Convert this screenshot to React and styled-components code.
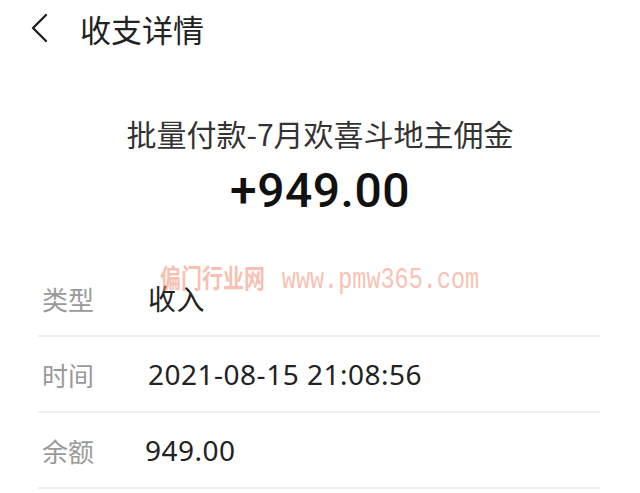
import styled, { createGlobalStyle } from 'styled-components'

//* Global
const GlobalStyle = createGlobalStyle`
  body {
    margin: 0;
    background: #fff;
    font-family: "Noto Sans CJK SC", "Noto Sans", sans-serif;
  }
`

const rows = [
  { label: '类型', value: '收入' },
  { label: '时间', value: '2021-08-15 21:08:56' },
  { label: '余额', value: '949.00', shift: -3 },
]

const App = () => {
  return (
    <>
      <GlobalStyle />
      <Page>
        <Header>
          <Back viewBox='0 0 18 30' aria-label='back'>
            <path d='M16 2 L3 15 L16 28' />
          </Back>
          <Title>收支详情</Title>
        </Header>
        <Summary>
          <Subject>批量付款-7月欢喜斗地主佣金</Subject>
          <Amount>+949.00</Amount>
        </Summary>
        <List>
          <Watermark>
            偏门行业网 <span>www.pmw365.com</span>
          </Watermark>
          {rows.map((row) => (
            <Row key={row.label}>
              <Label>{row.label}</Label>
              <Value $shift={row.shift}>{row.value}</Value>
            </Row>
          ))}
        </List>
      </Page>
    </>
  )
}

const Page = styled.div`
  width: 640px;
  height: 493px;
  overflow: hidden;
  background: #fff;
`

const Header = styled.div`
  height: 56px;
  display: flex;
  align-items: center;
  padding-left: 30px;
  gap: 32px;
`

const Back = styled.svg`
  width: 18px;
  height: 30px;
  fill: none;
  stroke: #222;
  stroke-width: 2.4;
  stroke-linecap: round;
  stroke-linejoin: round;
`

const Title = styled.div`
  font-size: 31px;
  color: #222;
  line-height: 1;
`

const Summary = styled.div`
  display: flex;
  flex-direction: column;
  align-items: center;
  padding-top: 57px;
`

const Subject = styled.div`
  font-size: 30px;
  line-height: 40px;
  color: #333;
`

const Amount = styled.div`
  margin-top: 12px;
  font-family: Roboto, "Liberation Sans", sans-serif;
  font-weight: 500;
  font-size: 48px;
  line-height: 52px;
  color: #111;
  letter-spacing: 0.5px;
`

const List = styled.div`
  position: relative;
  margin: 44px 40px 0 38px;
`

const Watermark = styled.div`
  position: absolute;
  left: 122px;
  top: -2px;
  font-family: "Noto Sans CJK SC", sans-serif;
  font-weight: 700;
  font-size: 21px;
  line-height: 28px;
  color: rgba(245, 150, 125, 0.6);
  transform: scaleY(1.25);
  transform-origin: top left;
  white-space: nowrap;
  z-index: 1;
  span {
    margin-left: 12px;
    font-family: "Liberation Mono", monospace;
    font-size: 23.5px;
    font-weight: 400;
  }
`

const Row = styled.div`
  height: 74px;
  display: flex;
  align-items: center;
  padding-left: 4px;
  border-bottom: 2px solid #f0f0f0;
`

const Label = styled.div`
  width: 106px;
  font-size: 26px;
  color: #9a9a9a;
`

const Value = styled.div`
  margin-left: ${(p) => p.$shift || 0}px;
  font-family: "Noto Sans", "Noto Sans CJK SC", sans-serif;
  font-size: 28px;
  letter-spacing: 0.5px;
  color: #222;
`

export default App
